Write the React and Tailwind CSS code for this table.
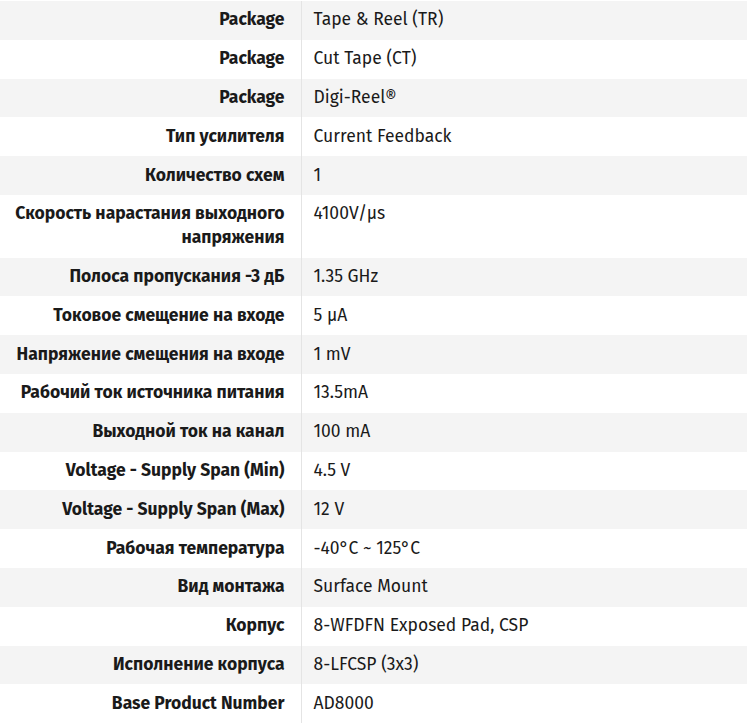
import React from 'react';

// Характеристики товара
const specs = [
  ['Package', 'Tape & Reel (TR)'],
  ['Package', 'Cut Tape (CT)'],
  ['Package', 'Digi-Reel®'],
  ['Тип усилителя', 'Current Feedback'],
  ['Количество схем', '1'],
  ['Скорость нарастания выходного напряжения', '4100V/µs'],
  ['Полоса пропускания -3 дБ', '1.35 GHz'],
  ['Токовое смещение на входе', '5 µA'],
  ['Напряжение смещения на входе', '1 mV'],
  ['Рабочий ток источника питания', '13.5mA'],
  ['Выходной ток на канал', '100 mA'],
  ['Voltage - Supply Span (Min)', '4.5 V'],
  ['Voltage - Supply Span (Max)', '12 V'],
  ['Рабочая температура', '-40°C ~ 125°C'],
  ['Вид монтажа', 'Surface Mount'],
  ['Корпус', '8-WFDFN Exposed Pad, CSP'],
  ['Исполнение корпуса', '8-LFCSP (3x3)'],
  ['Base Product Number', 'AD8000'],
];

export default function App() {
  return (
    <div
      className="w-[747px] bg-white pt-px text-[17.5px] leading-6 text-[#1a1a1a]"
      style={{ fontFamily: '"Fira Sans", "Noto Sans", sans-serif' }}
    >
      <table className="w-full border-collapse">
        <tbody>
          {specs.map(([label, value], i) => (
            <tr key={i} className={i % 2 === 0 ? 'bg-[#f4f4f4]' : 'bg-white'}>
              <th className="w-[301px] border-r border-[#e4e4e4] py-[7.4px] pl-3 pr-4 text-right align-top font-bold">
                {label}
              </th>
              <td className="py-[7.4px] pl-3 pr-4 text-left align-top font-normal">{value}</td>
            </tr>
          ))}
        </tbody>
      </table>
    </div>
  );
}
